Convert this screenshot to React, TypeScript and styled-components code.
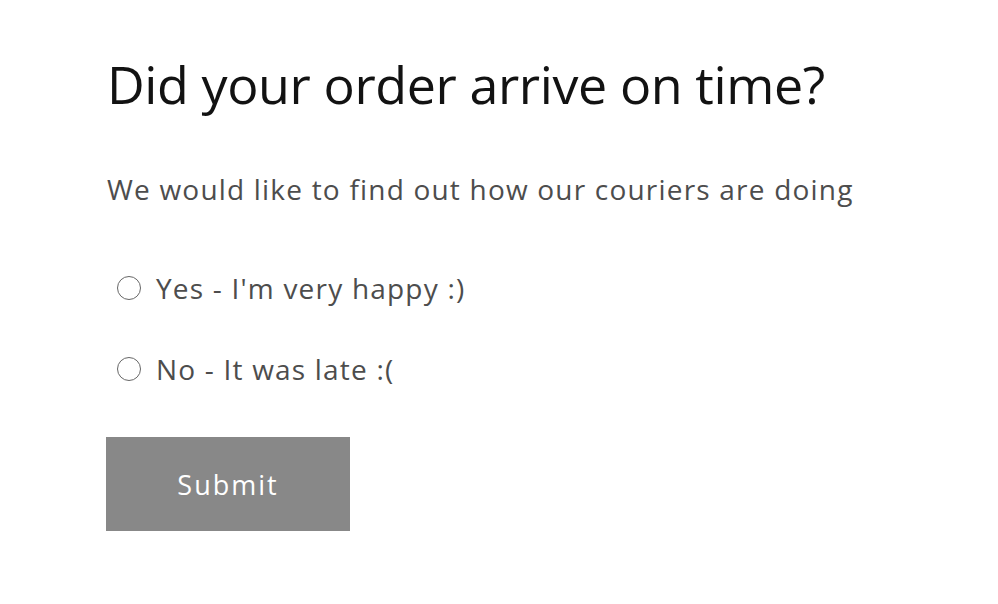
import React, { useState } from "react";
import styled, { createGlobalStyle } from "styled-components";

const Global = createGlobalStyle`
  html, body { margin: 0; padding: 0; background: #ffffff; }
  body { font-family: "Open Sans", "Noto Sans", sans-serif; }
`;

const Page = styled.div`
  padding: 52px 0 0 107px;
  display: flex;
  flex-direction: column;
  align-items: flex-start;
`;

const Heading = styled.h1`
  margin: 0;
  font-weight: 400;
  font-size: 52px;
  line-height: 64px;
  letter-spacing: -0.4px;
  color: #121212;
`;

const Sub = styled.p`
  margin: 55px 0 0;
  font-size: 28px;
  line-height: 36px;
  color: #4d4d4d;
  letter-spacing: 1.2px;
`;

const Options = styled.div`
  margin-top: 63px;
  display: flex;
  flex-direction: column;
  gap: 45px;
`;

const Option = styled.label`
  display: flex;
  align-items: center;
  gap: 15px;
  padding-left: 10px;
  font-size: 28px;
  line-height: 36px;
  letter-spacing: 1.2px;
  color: #4d4d4d;
  cursor: pointer;
`;

const Circle = styled.span<{ $checked: boolean }>`
  width: 24px;
  height: 24px;
  box-sizing: border-box;
  border-radius: 50%;
  border: 1.5px solid #666666;
  background: ${(p) => (p.$checked ? "radial-gradient(#666666 40%, transparent 45%)" : "transparent")};
  flex: none;
`;

const HiddenInput = styled.input`
  position: absolute;
  opacity: 0;
  width: 0;
  height: 0;
`;

const Button = styled.button`
  margin: 50px 0 0 -1px;
  width: 244px;
  height: 94px;
  border: none;
  background: #888888;
  color: #ffffff;
  font-family: "Open Sans", "Noto Sans", sans-serif;
  font-size: 27px;
  letter-spacing: 2px;
  cursor: pointer;
`;

const options = ["Yes - I'm very happy :)", "No - It was late :("];

export default function App() {
  const [value, setValue] = useState<string | null>(null);
  return (
    <>
      <Global />
      <Page>
        <Heading>Did your order arrive on time?</Heading>
        <Sub>We would like to find out how our couriers are doing</Sub>
        <Options>
          {options.map((o) => (
            <Option key={o}>
              <HiddenInput type="radio" name="arrival" checked={value === o} onChange={() => setValue(o)} />
              <Circle $checked={value === o} />
              {o}
            </Option>
          ))}
        </Options>
        <Button type="button">Submit</Button>
      </Page>
    </>
  );
}
